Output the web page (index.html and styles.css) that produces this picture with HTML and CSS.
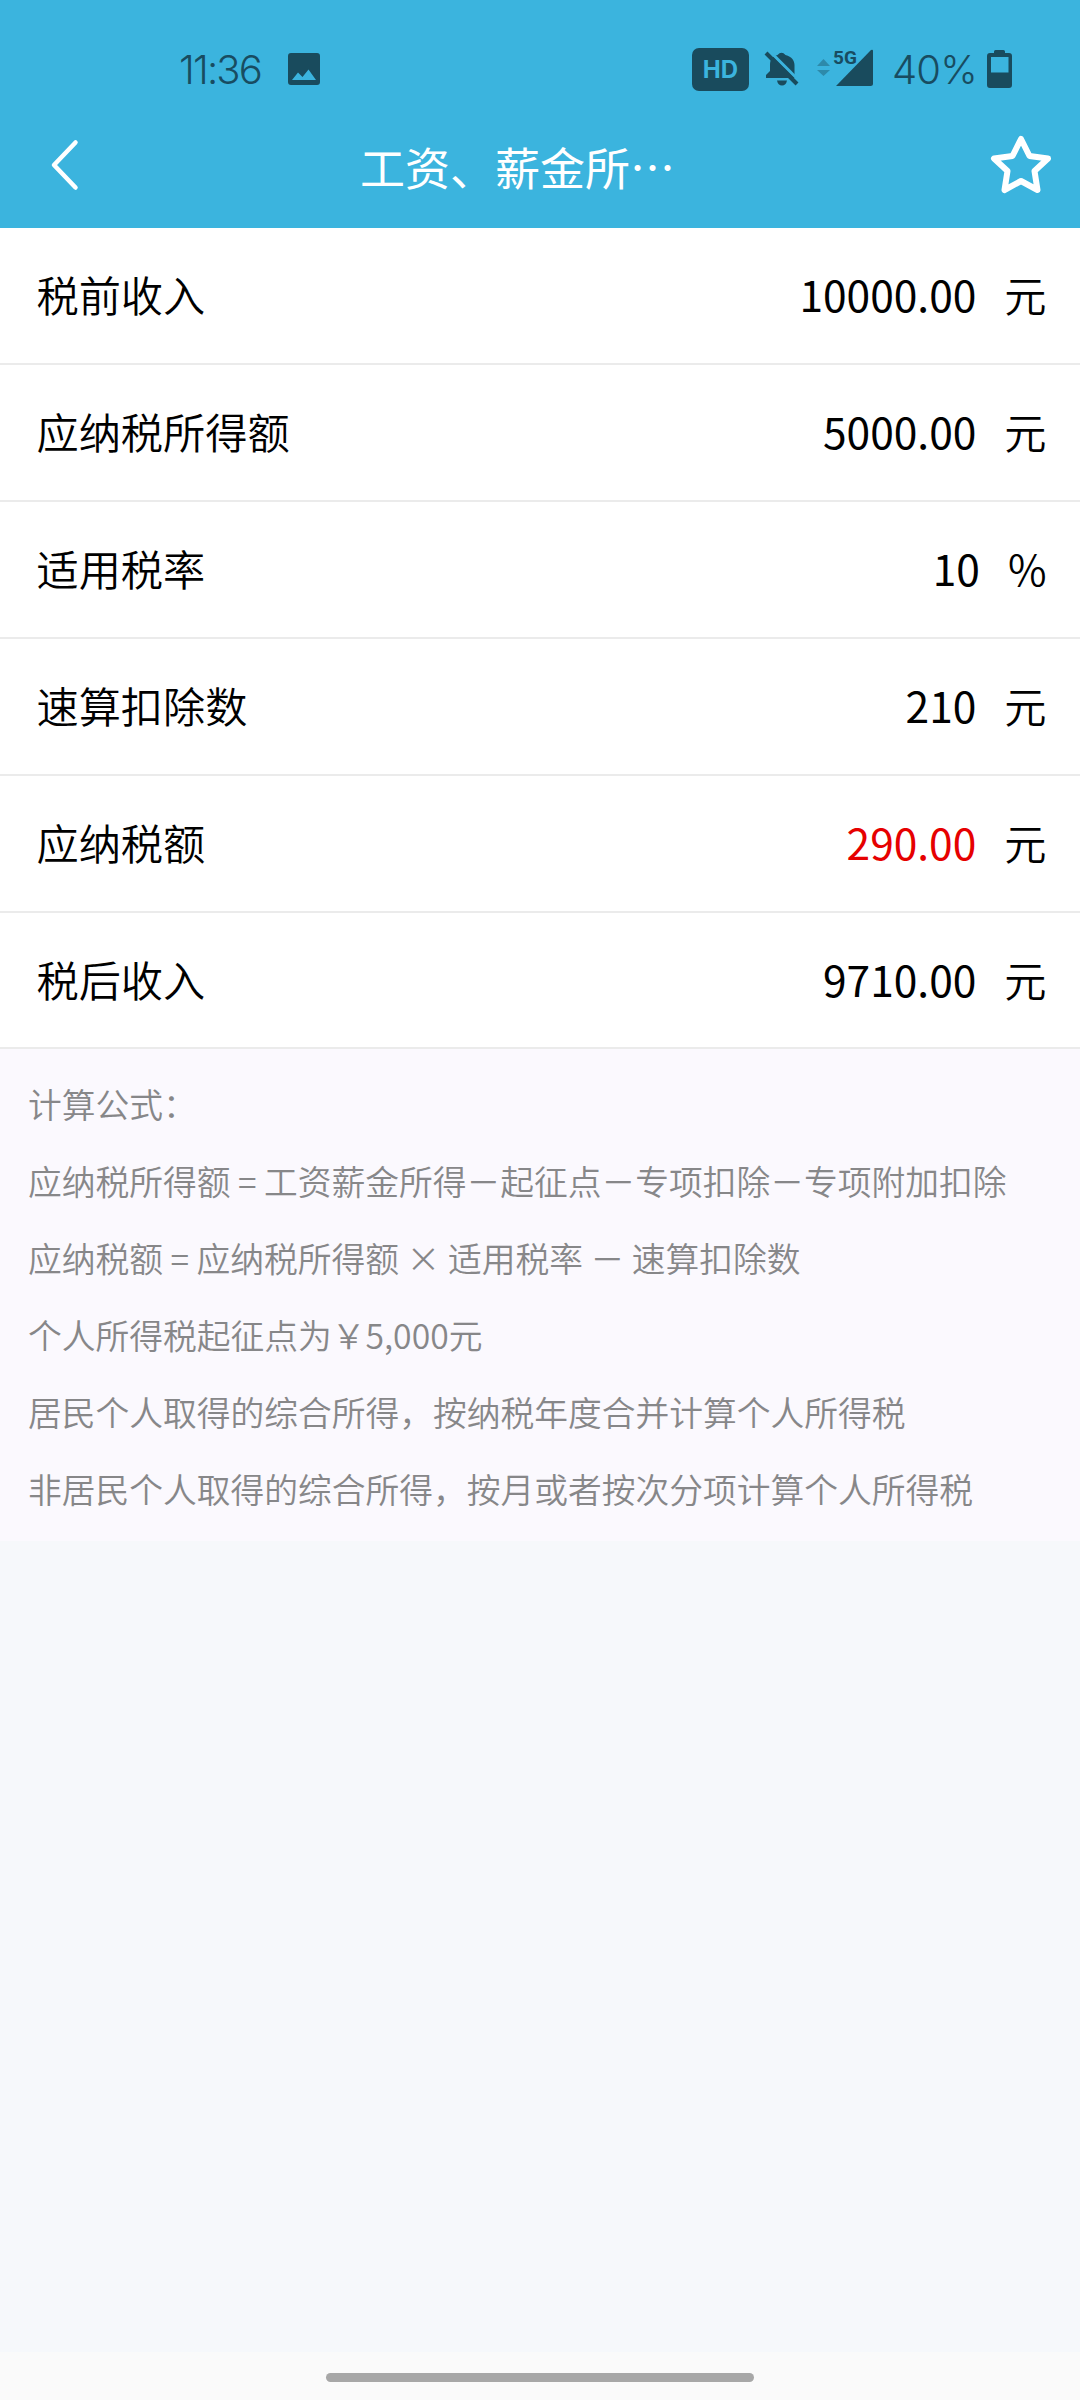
FILE: index.html
```
<!DOCTYPE html>
<html lang="zh-CN">
<head>
<meta charset="utf-8">
<title>工资、薪金所得</title>
<link rel="stylesheet" href="styles.css">
</head>
<body>
<div class="screen">
  <header class="header">
    <div class="status">
      <div class="status-left">
        <span class="clock">11:36</span>
        <svg class="icon-photo" width="32" height="32" viewBox="0 0 32 32"><path fill-rule="evenodd" d="M3 0H29a3 3 0 0 1 3 3V29a3 3 0 0 1-3 3H3a3 3 0 0 1-3-3V3a3 3 0 0 1 3-3ZM4 27H28L20.5 16.500L14.500 24L10 19.500Z"/></svg>
      </div>
      <div class="status-right">
        <span class="hd">HD</span>
        <svg class="icon-bell" width="36" height="36" viewBox="0 0 36 36"><path d="M2 27V24L6 20V14C6 8 9 5 13.500 4Q17.500 -0.500 21.500 4C28 5.500 30.500 10 30.500 14V24L33 27Z M13 29.500H23Q22 34.500 18 34.500Q14 34.500 13 29.500Z"/><path class="bell-gap" d="M5 -0.500L38 32.500"/><path class="bell-slash" d="M2 2L33 33"/></svg>
        <div class="signal">
          <svg width="58" height="40" viewBox="0 0 58 40"><path opacity=".4" d="M0 17H13L6.500 10ZM0 21H13L6.500 27Z"/><path d="M19 37L54 1Q56 0 56 2V34.500Q56 37 53.500 37Z"/></svg>
          <span class="net">5G</span>
        </div>
        <span class="percent">40%</span>
        <svg class="icon-battery" width="25" height="38" viewBox="0 0 25 38"><path fill-rule="evenodd" d="M7 3V1.500Q7 0 8.500 0H16.500Q18 0 18 1.500V3H22Q25 3 25 6V35Q25 38 22 38H3Q0 38 0 35V6Q0 3 3 3ZM4 7V22.500H21.500V7Z"/></svg>
      </div>
    </div>
    <nav class="bar">
      <svg class="back" width="30" height="54" viewBox="0 0 30 54"><path d="M26.500 5.500L5 28L26.500 50.500"/></svg>
      <h1 class="title">工资、薪金所…</h1>
      <svg class="star" width="62" height="60" viewBox="0 0 62 60"><path d="M31 5L39.500 22L58 24.500L44.500 37L47.500 56L31 47L14.500 56L17.500 37L4 24.500L22.500 22Z"/></svg>
    </nav>
  </header>
  <main class="content">
    <dl class="rows">
      <div class="row"><dt>税前收入</dt><dd>10000.00</dd><dd class="unit">元</dd></div>
      <div class="row"><dt>应纳税所得额</dt><dd>5000.00</dd><dd class="unit">元</dd></div>
      <div class="row"><dt>适用税率</dt><dd>10</dd><dd class="unit">%</dd></div>
      <div class="row"><dt>速算扣除数</dt><dd>210</dd><dd class="unit">元</dd></div>
      <div class="row"><dt>应纳税额</dt><dd class="tax">290.00</dd><dd class="unit">元</dd></div>
      <div class="row"><dt>税后收入</dt><dd>9710.00</dd><dd class="unit">元</dd></div>
    </dl>
    <section class="notes">
      <p>计算公式：</p>
      <p>应纳税所得额 = 工资薪金所得－起征点－专项扣除－专项附加扣除</p>
      <p>应纳税额 = 应纳税所得额 × 适用税率 － 速算扣除数</p>
      <p>个人所得税起征点为￥5,000元</p>
      <p>居民个人取得的综合所得，按纳税年度合并计算个人所得税</p>
      <p>非居民个人取得的综合所得，按月或者按次分项计算个人所得税</p>
    </section>
  </main>
  <footer class="home"><div class="handle"></div></footer>
</div>
</body>
</html>
```
FILE: styles.css
```
* { box-sizing: border-box; margin: 0; padding: 0; }
body { font-family: "Noto Sans CJK SC", sans-serif; font-weight: 350; }
.screen { width: 1080px; height: 2400px; display: flex; flex-direction: column; background: #f6f8fb; overflow: hidden; }
.header { height: 228px; background: #3bb4de; color: #fff; }
svg { display: block; flex: none; }

.status { height: 100px; padding: 38px 68px 0 179px; display: flex; justify-content: space-between; color: #184c61; font-family: Inter, sans-serif; }
.status svg { fill: #194b5d; }
.status-left, .status-right { height: 62px; display: flex; align-items: center; }
.clock { width: 109px; font-size: 40px; font-weight: 300; letter-spacing: -1.8px; white-space: nowrap; }
.percent { width: 84px; margin: 0 11px 0 17px; font-size: 40px; font-weight: 300; letter-spacing: -0.800px; white-space: nowrap; }
.hd { width: 57px; height: 43px; margin-right: 1px; border-radius: 7px; background: #194b5d; color: #3bb4de; font: 700 24px/43px Inter, sans-serif; text-align: center; }
.icon-bell { margin-left: 14px; }
.bell-gap { fill: none; stroke: #3bb4de; stroke-width: 3; }
.bell-slash { fill: none; stroke: #194b5d; stroke-width: 4; }
.signal { position: relative; margin-left: 17px; }
.net { position: absolute; left: 16px; top: -1px; font: 700 19px/20px Roboto, sans-serif; }

.bar { height: 128px; padding: 0 28px 0 49px; display: flex; align-items: center; }
.back, .star { fill: none; stroke: #fff; stroke-linecap: round; stroke-linejoin: round; }
.back { stroke-width: 4.500; }
.star { stroke-width: 6; margin-left: auto; }
.title { margin: 5px 0 0 281px; font-size: 45px; line-height: 66px; font-weight: 400; white-space: nowrap; }

.rows { background: #fff; }
.row { height: 137px; padding: 0 33.500px 3px 36.500px; border-bottom: 2px solid #ebebeb; display: flex; align-items: center; font-size: 42.200px; line-height: 60px; color: #000; }
.row:last-child { height: 136px; }
.row dt { flex: 1; }
.row dd { font-size: 42.500px; font-weight: 400; }
.row .unit { margin-left: 28px; font-size: 42.200px; font-weight: 350; }
.row .tax { color: #e60000; }

.notes { height: 492px; padding: 16px 29px 0 28px; background: #fbf9fe; color: #878789; }
.notes p { font-size: 33.750px; line-height: 77px; white-space: nowrap; }
.home { height: 48px; margin-top: auto; padding-top: 21px; background: #fafafa; }
.handle { width: 428px; height: 9px; margin: 0 auto; border-radius: 5px; background: #a7a7a7; }
```
